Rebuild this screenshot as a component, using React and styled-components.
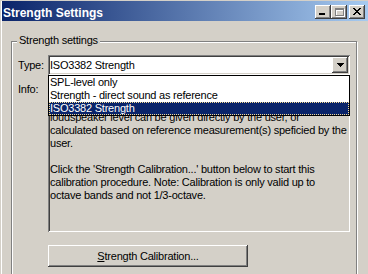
import React from "react"
import styled, { createGlobalStyle } from "styled-components"

const GlobalStyle = createGlobalStyle`
  html, body {
    margin: 0;
    padding: 0;
    background: #d4d0c8;
    overflow: hidden;
  }

  body {
    font-family: "Liberation Sans", Arial, sans-serif;
    font-size: 11px;
    letter-spacing: -0.22px;
    color: #000;
  }
`

const raised = `
  box-shadow: inset -1px -1px 0 #404040, inset 1px 1px 0 #fff,
    inset -2px -2px 0 #808080, inset 2px 2px 0 #d4d0c8;
`

const sunken = `
  box-shadow: inset 1px 1px 0 #808080, inset -1px -1px 0 #fff,
    inset 2px 2px 0 #404040, inset -2px -2px 0 #d4d0c8;
`

const Window = styled.div`
  width: 368px;
  height: 274px;
  box-sizing: border-box;
  padding: 1px 0 0 2px;
  background: #d4d0c8;
  box-shadow: inset 1px 1px 0 #d4d0c8, inset 2px 2px 0 #fff;
  overflow: hidden;
`

const TitleBar = styled.div`
  display: flex;
  align-items: flex-start;
  height: 20px;
  padding: 0 3px 0 1px;
  background: linear-gradient(to right, #0a246a, #a6caf0);
`

const TitleText = styled.div`
  flex: 1;
  padding-top: 5px;
  line-height: 14px;
  font-weight: bold;
  font-size: 12px;
  letter-spacing: 0;
  color: #fff;
  white-space: nowrap;
`

const TitleButtons = styled.div`
  display: flex;
  margin-top: 4px;
`

const TitleButton = styled.div`
  width: 16px;
  height: 14px;
  background: #d4d0c8;
  margin-left: ${props => (props.$gap ? "2px" : "0")};
  ${raised}

  svg {
    display: block;
  }
`

const Body = styled.div`
  padding: 20px 0 0 9px;
`

const Group = styled.div`
  position: relative;
  width: 346px;
  height: 260px;
  box-sizing: border-box;
  padding: 13px 6px 0;
  border: 1px solid #808080;
  box-shadow: inset 1px 1px 0 #fff, 1px 1px 0 #fff;
`

const GroupTitle = styled.span`
  position: absolute;
  top: -8px;
  left: 5px;
  padding: 0 2px;
  line-height: 13px;
  background: #d4d0c8;
`

const Form = styled.div`
  display: grid;
  grid-template-columns: 30px 302px;
  row-gap: 8px;
`

const FieldLabel = styled.div`
  line-height: ${props => props.$line || "13px"};
`

const Combo = styled.div`
  position: relative;
  display: flex;
  align-items: center;
  height: 20px;
  padding-left: 2px;
  background: #fff;
  ${sunken}
`

const ComboValue = styled.span`
  flex: 1;
  line-height: 13px;
`

const DropButton = styled.div`
  display: flex;
  align-items: center;
  justify-content: center;
  width: 16px;
  height: 16px;
  margin-right: 2px;
  background: #d4d0c8;
  ${raised}
`

const DropList = styled.ul`
  position: absolute;
  top: 100%;
  left: 0;
  right: 0;
  z-index: 2;
  margin: 0;
  padding: 0;
  list-style: none;
  background: #fff;
  border: 1px solid #000;
`

const DropItem = styled.li`
  height: 13px;
  line-height: 13px;
  padding-left: 1px;
  white-space: nowrap;
  background: ${props => (props.$selected ? "#0a246a" : "transparent")};
  color: ${props => (props.$selected ? "#fff" : "#000")};
  outline: ${props => (props.$selected ? "1px dotted #f5db95" : "none")};
  outline-offset: -1px;
`

const InfoBox = styled.div`
  height: 149px;
  box-sizing: border-box;
  padding: 2px 0 0 2px;
  line-height: 13px;
  white-space: pre;
  overflow: hidden;
  ${sunken}
`

const ActionRow = styled.div`
  grid-column: 2;
  margin-top: 5px;
`

const PushButton = styled.button`
  width: 200px;
  height: 22px;
  padding: 0;
  border: none;
  background: #d4d0c8;
  font-family: inherit;
  font-size: 11px;
  letter-spacing: inherit;
  color: #000;
  ${raised}
`

const infoLines = [
  "The strength is calculated as the difference between the",
  "measured level and the reference level. The reference",
  "loudspeaker level can be given directly by the user, or",
  "calculated based on reference measurement(s) speficied by the",
  "user.",
  "",
  "Click the 'Strength Calibration...' button below to start this",
  "calibration procedure. Note: Calibration is only valid up to",
  "octave bands and not 1/3-octave.",
]

const options = [
  "SPL-level only",
  "Strength - direct sound as reference",
  "ISO3382 Strength",
]

const MinGlyph = () => (
  <svg width="16" height="14" viewBox="0 0 16 14">
    <rect x="4" y="8" width="6" height="2" fill="#000" />
  </svg>
)

const MaxGlyph = () => (
  <svg width="16" height="14" viewBox="0 0 16 14" shapeRendering="crispEdges">
    <path d="M5 4h9v8H5z M6 6h7v5H6z" fill="#fff" fillRule="evenodd" />
    <path d="M4 3h9v8H4z M5 5h7v5H5z" fill="#808080" fillRule="evenodd" />
  </svg>
)

const CloseGlyph = () => (
  <svg width="16" height="14" viewBox="0 0 16 14" shapeRendering="crispEdges">
    <path
      d="M4 3h2v1H4z M10 3h2v1h-2z M5 4h2v1H5z M9 4h2v1H9z M6 5h4v1H6z M7 6h2v1H7z M6 7h4v1H6z M5 8h2v1H5z M9 8h2v1H9z M4 9h2v1H4z M10 9h2v1h-2z"
      fill="#000"
    />
  </svg>
)

const Arrow = () => (
  <svg width="7" height="4" viewBox="0 0 7 4" shapeRendering="crispEdges">
    <path d="M0 0h7v1H0z M1 1h5v1H1z M2 2h3v1H2z M3 3h1v1H3z" fill="#000" />
  </svg>
)

const App = () => {
  return (
    <>
      <GlobalStyle />
      <Window>
        <TitleBar>
          <TitleText>Strength Settings</TitleText>
          <TitleButtons>
            <TitleButton>
              <MinGlyph />
            </TitleButton>
            <TitleButton>
              <MaxGlyph />
            </TitleButton>
            <TitleButton $gap>
              <CloseGlyph />
            </TitleButton>
          </TitleButtons>
        </TitleBar>
        <Body>
          <Group>
            <GroupTitle>Strength settings</GroupTitle>
            <Form>
              <FieldLabel $line="20px">Type:</FieldLabel>
              <Combo>
                <ComboValue>ISO3382 Strength</ComboValue>
                <DropButton>
                  <Arrow />
                </DropButton>
                <DropList>
                  {options.map(option => (
                    <DropItem key={option} $selected={option === "ISO3382 Strength"}>
                      {option}
                    </DropItem>
                  ))}
                </DropList>
              </Combo>
              <FieldLabel>Info:</FieldLabel>
              <InfoBox>{infoLines.join("\n")}</InfoBox>
              <ActionRow>
                <PushButton>
                  <u>S</u>trength Calibration...
                </PushButton>
              </ActionRow>
            </Form>
          </Group>
        </Body>
      </Window>
    </>
  )
}

export default App
